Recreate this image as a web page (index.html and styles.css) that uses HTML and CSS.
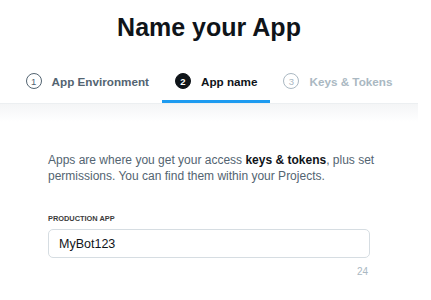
FILE: index.html
```html
<!DOCTYPE html>
<html lang="en">

<head>
    <meta charset="UTF-8">
    <meta name="viewport" content="width=device-width, initial-scale=1.0">
    <title>Name your App</title>
    <link rel="stylesheet" href="styles.css">
</head>

<body>
    <div class="page">
        <h1 class="title">Name your App</h1>

        <nav class="steps">
            <div class="step done">
                <span class="step-num">1</span>
                <span class="step-label">App Environment</span>
            </div>
            <div class="step active">
                <span class="step-num">2</span>
                <span class="step-label">App name</span>
            </div>
            <div class="step todo">
                <span class="step-num">3</span>
                <span class="step-label">Keys &amp; Tokens</span>
            </div>
        </nav>

        <div class="content">
            <p class="intro">Apps are where you get your access <strong>keys &amp; tokens</strong>, plus set permissions. You can find them within your Projects.</p>

            <form class="app-form">
                <label for="appName">PRODUCTION APP</label>
                <input type="text" id="appName" name="appName" value="MyBot123">
                <div class="counter">24</div>
            </form>
        </div>
    </div>
</body>

</html>
```

FILE: styles.css
```css
body {
    font-family: "Liberation Sans", Arial, sans-serif;
    margin: 0;
    padding: 0;
    background-color: #ffffff;
    color: #0f1419;
}

.page {
    width: 418px;
}

.title {
    font-size: 25px;
    line-height: 30px;
    font-weight: bold;
    text-align: center;
    margin: 12px 0 20px;
}

/* step tabs */
.steps {
    display: flex;
    justify-content: center;
    border-bottom: 1px solid #eceff1;
}

.step {
    display: flex;
    align-items: center;
    gap: 10px;
    height: 38px;
    padding: 0 13px;
    border-bottom: 3px solid transparent;
    font-size: 11.7px;
    font-weight: bold;
}

.step-num {
    width: 14px;
    height: 14px;
    border: 1.3px solid currentColor;
    border-radius: 50%;
    display: flex;
    align-items: center;
    justify-content: center;
    font-size: 9.5px;
    font-weight: normal;
}

.step.done {
    color: #536471;
}

.step.active {
    color: #0f1419;
    border-bottom-color: #1d9bf0;
}

.step.active .step-num {
    background-color: #0f1419;
    border-color: #0f1419;
    color: #ffffff;
    font-weight: bold;
}

.step.todo {
    color: #aab8c2;
}

/* body */
.content {
    background: linear-gradient(#f4f5f6, #ffffff 18px);
    padding: 48px 48px 0;
}

.intro {
    margin: 0 -8px 30px 0;
    font-size: 12px;
    line-height: 16px;
    color: #536471;
}

.intro strong {
    color: #0f1419;
}

.app-form label {
    display: block;
    font-size: 7.4px;
    font-weight: bold;
    color: #3b3b3b;
    margin-bottom: 6px;
}

.app-form input {
    display: block;
    width: 100%;
    height: 29px;
    box-sizing: border-box;
    border: 1px solid #d6dde2;
    border-radius: 5px;
    padding: 0 10px;
    font-family: inherit;
    font-size: 12.5px;
    color: #0f1419;
}

.counter {
    text-align: right;
    font-size: 10px;
    color: #aab8c2;
    margin-top: 8px;
    padding-right: 2px;
}
```
